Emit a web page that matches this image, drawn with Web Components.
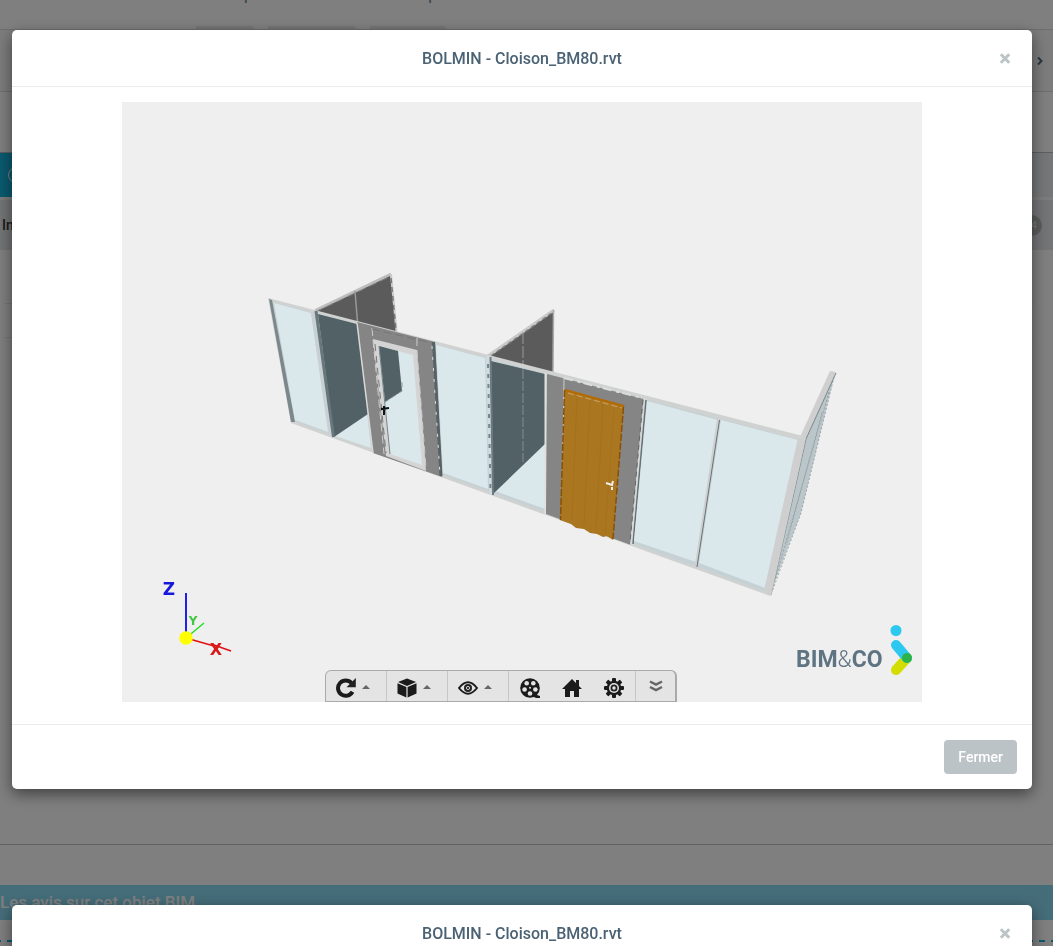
<!DOCTYPE html>
<html lang="fr">
<head>
<meta charset="utf-8">
<title>BOLMIN - Cloison_BM80.rvt</title>
<style>
html, body { margin: 0; height: 100%; overflow: hidden; }
body { font-family: Roboto, "Liberation Sans", sans-serif; font-size: 14px; color: #4a6274; background: #fff; }
</style>
</head>
<body>
<object-page></object-page>
<modal-stack>
  <modal-box heading="BOLMIN - Cloison_BM80.rvt">
    <model-viewer></model-viewer>
    <action-button slot="footer">Fermer</action-button>
  </modal-box>
  <modal-box heading="BOLMIN - Cloison_BM80.rvt"></modal-box>
</modal-stack>

<script>
const define = (name, html, setup) => customElements.define(name, class extends HTMLElement {
  connectedCallback() {
    if (this.shadowRoot) return;
    const t = document.createElement('template');
    t.innerHTML = html;
    this.attachShadow({ mode: 'open' }).append(t.content.cloneNode(true));
    if (setup) setup(this, this.shadowRoot);
  }
});

/* Product page behind the dialogs */
define('object-page', `
<style>
:host { display: block; height: 100%; overflow: hidden; background: #fff; }
.intro { height: 29px; overflow: hidden; padding-left: 196px; display: flex; flex-direction: column; justify-content: flex-end; box-sizing: border-box; }
.intro p { margin: 0 0 21px; font-size: 16px; line-height: 20px; color: #5f7d93; }
.tags { display: flex; gap: 14px; }
.tags i { flex: none; height: 3px; background: #ebecec; border-radius: 0 8px 0 0; }
.tags i:nth-child(1) { width: 58px; } .tags i:nth-child(2) { width: 88px; } .tags i:nth-child(3) { width: 76px; }
.crumb { height: 61px; border: solid #dcdcdc; border-width: 1px 0; background: #f9f9f9; display: flex; justify-content: flex-end; align-items: center; padding-right: 9px; }
.blank { height: 60px; border-bottom: 1px solid #b9bec2; }
.tabs { height: 44px; display: flex; background: #e9edf0; border-bottom: 3px solid #f8f8f8; }
.tab { width: 320px; background: #15b4df; display: flex; align-items: center; padding-left: 8px; }
.tab i { width: 14px; height: 14px; border: 1px solid #fff; border-radius: 50%; }
.info { height: 50px; display: flex; align-items: center; justify-content: space-between; background: #e6e8ea; padding: 0 11px 0 2px; color: #333; font-weight: 500; }
.badge { width: 21px; height: 21px; border-radius: 50%; background: #b5b9bb; color: #eee; font-size: 11px; line-height: 21px; text-align: right; padding-right: 5px; box-sizing: border-box; }
.rows { height: 595px; border-bottom: 1px solid #bec2c8; padding: 53px 20px 0 5px; box-sizing: border-box; }
.rows i { display: block; height: 33px; border-top: 1px solid #e8e8e8; }
.reviews { margin-top: 40px; height: 35px; background: #8adaf2; }
h2 { margin: 0; font-size: 17px; line-height: 35px; font-weight: 500; color: #fff; }
.dash { margin-top: 20px; height: 2px; background: repeating-linear-gradient(90deg, #15b4df 0 1px, #fff 1px 7px, #15b4df 7px 12px); }
svg { display: block; }
</style>
<div class="intro"><p>Des espaces de travail libres et épurés</p><div class="tags"><i></i><i></i><i></i></div></div>
<div class="crumb"><svg width="8" height="10" viewBox="0 0 8 10" fill="none" stroke="#4a6f8c" stroke-width="2"><path d="M2 1.500 5.500 5 2 8.500"/></svg></div>
<div class="blank"></div>
<div class="tabs"><div class="tab"><i></i></div></div>
<div class="info"><span>Informations</span><span class="badge">4</span></div>
<div class="rows"><i></i><i></i></div>
<div class="reviews"><h2>Les avis sur cet objet BIM</h2></div>
<div class="dash"></div>
`);

/* Backdrop that stacks dialogs */
define('modal-stack', `
<style>
:host { position: fixed; inset: 0; overflow: hidden; background: rgba(0,0,0,.5); display: flex; flex-direction: column; gap: 116px; padding: 30px 21px 0 12px; }
</style><slot></slot>`);

define('modal-box', `
<style>
:host { display: block; flex: none; background: #fff; border-radius: 5px; box-shadow: 0 5px 15px rgba(0,0,0,.5); }
header { display: grid; grid-template-columns: 1fr auto 1fr; align-items: center; box-sizing: border-box; height: 57px; padding: 2px 20px 0; border-bottom: 1px solid #ebebeb; }
h4 { grid-column: 2; margin: 0; font-size: 16px; line-height: 24px; font-weight: 500; color: #4a6274; }
header button { justify-self: end; border: 0; background: none; padding: 0; width: 14px; font: 900 22px/24px Roboto, sans-serif; color: #bcc4c8; }
.body { padding: 15px 15px 22px; }
footer { display: flex; justify-content: flex-end; padding: 15px; border-top: 1px solid #ebebeb; min-height: 34px; }
</style>
<header><h4></h4><button type="button" aria-label="Close">×</button></header>
<div class="body"><slot></slot></div>
<footer><slot name="footer"></slot></footer>
`, (el, root) => { root.querySelector('h4').textContent = el.getAttribute('heading'); });

define('action-button', `
<style>
:host { display: block; }
button { height: 34px; padding: 0 14px; border: 0; border-radius: 4px; background: #bcc3c7; color: #fff; font: 500 14px/20px Roboto, sans-serif; }
</style><button type="button"><slot></slot></button>`);

define('viewer-toolbar', `
<style>
:host { display: flex; box-sizing: border-box; height: 32px; border: 1px solid #aaa; border-right-width: 2px; border-radius: 6px 6px 0 0; background: #e4e4e4; }
.group { display: flex; padding: 0; border-left: 1px solid #c6c6c6; }
.group:first-child, style + .group { border-left: 0; }
button { border: 0; padding: 4px 0 0; background: none; width: 42px; display: flex; align-items: center; justify-content: center; gap: 5px; }
.menu { width: 60px; padding-right: 6px; }
.menu:after { content: ""; border: solid transparent; border-width: 0 4px 4px; border-bottom-color: #666; margin: 0 0 2px 1px; }
.more { width: 39px; padding: 0; }
svg { display: block; flex: none; }
</style>
<div class="group"><button class="menu" aria-label="Rotation"><svg width="20" height="20" viewBox="0 0 20 20"><path d="M16.500 13.800A7.700 7.700 0 1 1 15.500 5" fill="none" stroke="#1b1b1b" stroke-width="4"/><path d="M19.800 0v9.300H10.500z" fill="#222"/></svg></button></div>
<div class="group"><button class="menu" aria-label="Vues"><svg width="20" height="20" viewBox="0 0 20 20" fill="#1b1b1b"><path d="M10 0.500 19 4 10 8 1 4z"/><path d="M0.500 5.200 9.400 9.100V19.600L0.500 15.500zM19.500 5.200 10.600 9.100V19.600L19.500 15.500z"/></svg></button></div>
<div class="group"><button class="menu" aria-label="Affichage"><svg width="20" height="14" viewBox="0 0 20 14"><path d="M1 7Q10-4.500 19 7 10 18.500 1 7z" fill="none" stroke="#1b1b1b" stroke-width="2"/><circle cx="10" cy="7" r="4" fill="#222"/><circle cx="10" cy="7" r="1.600" fill="none" stroke="#ccc"/></svg></button></div>
<div class="group">
<button aria-label="Film"><svg width="20" height="20" viewBox="0 0 20 20"><circle cx="10" cy="10" r="9.800" fill="#1b1b1b"/><path d="M14 16 20 18V20H16L12 18z" fill="#1b1b1b"/><g fill="#e4e4e4"><circle cx="6.700" cy="5.200" r="2.300"/><circle cx="13.300" cy="5.200" r="2.300"/><circle cx="4.600" cy="11.500" r="2.300"/><circle cx="15.400" cy="11.500" r="2.300"/><circle cx="10" cy="15.500" r="2.300"/><circle cx="10" cy="9.800" r="1"/></g></svg></button>
<button aria-label="Accueil"><svg width="20" height="20" viewBox="0 0 20 20" fill="#1b1b1b"><path d="M10 1 20 11H17V19H12V13H8V19H3V11H0zM14 2H17V8L14 5z"/></svg></button>
<button aria-label="Paramètres"><svg width="20" height="20" viewBox="0 0 20 20"><g fill="#1b1b1b"><rect x="8" y="0" width="4" height="20" rx="1"/><rect x="0" y="8" width="20" height="4" rx="1"/><g transform="rotate(45 10 10)"><rect x="8" y="0" width="4" height="20" rx="1"/><rect x="0" y="8" width="20" height="4" rx="1"/></g><circle cx="10" cy="10" r="7.300"/></g><circle cx="10" cy="10" r="5" fill="#e4e4e4"/><circle cx="10" cy="10" r="2.600" fill="none" stroke="#222" stroke-width="1.800"/></svg></button>
</div>
<div class="group"><button class="more" aria-label="Réduire"><svg width="14" height="12" viewBox="0 0 14 12" fill="none" stroke="#666" stroke-width="2.500"><path d="M1 1.500 7 4.500 13 1.500M1 7 7 10 13 7"/></svg></button></div>
`);

/* 3D scene: a glazed partition with two doors */
define('model-viewer', `
<style>
:host { display: block; position: relative; max-width: 800px; margin: 0 auto; background: #efefef; }
.scene { display: block; width: 100%; height: auto; }
.bar { position: absolute; left: 0; right: 42px; bottom: 0; display: flex; justify-content: center; }
</style>
<svg class="scene" viewBox="122 102 800 600" role="img" aria-label="Cloison BM80">
  <!-- rear partitions -->
  <path d="M315 311 390 274 397 333z" fill="#5b5b5b"/>
  <path d="M315 310.500 391 274" stroke="#bdbdbd" stroke-width="2.500"/>
  <path d="M315 312 391 276" stroke="#888" stroke-dasharray="8 4"/>
  <path d="M391 274 396.500 331" stroke="#ccc" stroke-width="2"/><path d="M391 278 396 330" stroke="#777" stroke-width="1.500" stroke-dasharray="5 4"/>
  <path d="M355 291 357.500 322" stroke="#999" stroke-width="1.500"/>
  <path d="M489 357 553 310V373L545 373z" fill="#5b5b5b"/>
  <path d="M488 356 554 310" stroke="#c8c8c8" stroke-width="3"/><path d="M491 356 552 313" stroke="#777" stroke-width="1.500" stroke-dasharray="4 3"/>
  <path d="M553.500 310 553 372" stroke="#aaa" stroke-width="1.500"/><path d="M523 332V366" stroke="#999" stroke-dasharray="12 2"/>
  <!-- return wall -->
  <path d="M835 373 801 513 770 595 805 438z" fill="#bac6ca"/>
  <path d="M835 373 801 513 772 592M829 392 775 580M822 413 786 545" stroke="#8b979b" stroke-width=".8" stroke-dasharray="2 2" fill="none"/>
  <path d="M800 437 830 371 836 372 806 439z" fill="#cfcfcf"/><path d="M836 373 806 439 771 595" fill="none" stroke="#7b888c"/>
  <!-- front frame -->
  <path d="M268 298 803 436 770 596 291 423z" fill="#d0d2d2"/>
  <path d="M272 302 800 440 767 592 294 421z" fill="#c5d1d4"/>
  <path d="M269 299 272 300 295 422 291 422z" fill="#7b878a"/>
  <!-- bay 1 and 2 -->
  <path d="M274 303 311 313 328 432 295 420z" fill="#dae7eb"/>
  <path d="M311 312 316 313 333 436 329 433z" fill="#c9d0d3"/>
  <path d="M319 314 357 324 371 448 335 436z" fill="#dae7eb"/>
  <path d="M318 314 357 324 368 414 334 437z" fill="#526166"/>
  <path d="M316 311 333.500 437" stroke="#67777c" stroke-width="3"/>
  <!-- glazed door -->
  <path d="M357 322 435 342 442 477 373 453z" fill="#858585"/>
  <path d="M357 323 373 453" stroke="#d8d8d8" stroke-width="1.500"/>
  <path d="M373 339 417 350 426 471 386 456z" fill="#d4d4d4"/>
  <path d="M379 346 413 355 422 465 390 454z" fill="#dae7eb"/>
  <path d="M379 346 398 351 402 391 385 402z" fill="#526166"/>
  <path d="M379 346 390 454" stroke="#75858a"/><path d="M385 402 402 391V381" fill="none" stroke="#8b999d" stroke-dasharray="5 3"/>
  <path d="M372 328 373 340 384 454M417 338 417 351 426 468" fill="none" stroke="#ccc" stroke-dasharray="8 4"/>
  <path d="M375 344 386 453" stroke="#777" stroke-dasharray="7 5"/>
  <path d="M372 329 432 343" stroke="#777" stroke-dasharray="8 4"/>
  <path d="M384 406V415M381 409 389 408" stroke="#111" stroke-width="2"/>
  <!-- bay 3 and 4 -->
  <path d="M433.500 342 441 476" stroke="#566266" stroke-width="3"/><path d="M432 346 440 475" stroke="#ddd" stroke-dasharray="3 8"/>
  <path d="M436 345 485 358 488 489 443 473z" fill="#dae7eb"/>
  <path d="M488 356 491.500 495" stroke="#d2dcdf" stroke-width="4"/><path d="M488 364 490.500 492" stroke="#75868b" stroke-width="2" stroke-dasharray="4 6"/>
  <path d="M493 361 545 374V509L495 491z" fill="#dae7eb"/>
  <path d="M491 361 545 374V444L493 494z" fill="#526166"/>
  <path d="M490.500 357 493 495" stroke="#6c7c81" stroke-width="2"/><path d="M523 369V462" stroke="#829096" stroke-dasharray="10 2"/>
  <path d="M545.500 373V514" stroke="#e0e0e0" stroke-width="2"/>
  <!-- timber door -->
  <path d="M547 374 644 399 631 545 546 514z" fill="#858585"/>
  <path d="M564 378 562 520" stroke="#ccc"/><path d="M564 378 642 398" stroke="#ddd" stroke-width="2" stroke-dasharray="9 5 3 3"/>
  <path d="M565 389 624 406 613 540 607 536 603 537 597 534 590 533 584 529 576 528 571 524 560 520z" fill="#aa7620"/>
  <path d="M565 390 624 406" stroke="#b56a00" stroke-width="2"/><path d="M568 393 622 408" stroke="#c9a56b" stroke-dasharray="6 3"/>
  <path d="M564.500 390 560.500 520M623.500 407 613 539" stroke="#875009" stroke-width="1.500" stroke-dasharray="7 2"/>
  <path d="M577 396 572 520M590 400 584 525M603 404 596 530M614 408 605 534" stroke="#a5711e"/>
  <path d="M606 483 612 485 613 481M612 487V490" fill="none" stroke="#eee" stroke-width="2"/>
  <path d="M645 398 631.500 545" stroke="#d8d8d8" stroke-width="3"/><path d="M643 400 630 543" stroke="#666" stroke-dasharray="5 4"/><path d="M646 400 633 544" stroke="#617276" stroke-width="1.500"/>
  <!-- bay 5 and 6 -->
  <path d="M647 401 718 420 696 562 634 541z" fill="#dae7eb"/>
  <path d="M721 420 798 440 765 588 699 563z" fill="#dae7eb"/>
  <path d="M718.500 419 696 568" stroke="#cfcfcf" stroke-width="3"/><path d="M719.500 420 697 567" stroke="#637377"/>
  <path d="M798 438 806 438 771 596 764 591z" fill="#cfcfcf"/>
  <!-- axes -->
  <path d="M186 638V593" stroke="#2020e8" stroke-width="2"/><path d="M186 638 204 623" stroke="#20e020" stroke-width="1.500"/><path d="M186 638 214 646M214 645 231 651" stroke="#e01010" stroke-width="1.500"/>
  <circle cx="186" cy="638" r="6.800" fill="#ff0"/>
  <g font-family="DejaVu Sans, sans-serif" font-weight="700" text-anchor="middle"><text x="169" y="595" font-size="17" fill="#1717dc">Z</text><text x="193" y="625" font-size="12" fill="#42c742">Y</text><text x="216" y="655" font-size="16" fill="#d91818">X</text></g>
  <!-- brand -->
  <text x="796" y="667" font-family="Roboto, sans-serif" font-size="23" font-weight="700" fill="#5f7482">BIM<tspan font-weight="300">&amp;</tspan>CO</text>
  <g stroke-width="10" stroke-linecap="round"><path d="M896 670 907 658" stroke="#d3de00"/><path d="M896 645 907 658" stroke="#2cc8f0"/></g><circle cx="907" cy="658" r="5" fill="#2cb34a"/><circle cx="896" cy="630.500" r="5.500" fill="#2cc8f0"/>
</svg>
<div class="bar"><viewer-toolbar></viewer-toolbar></div>
`);
</script>
</body>
</html>
